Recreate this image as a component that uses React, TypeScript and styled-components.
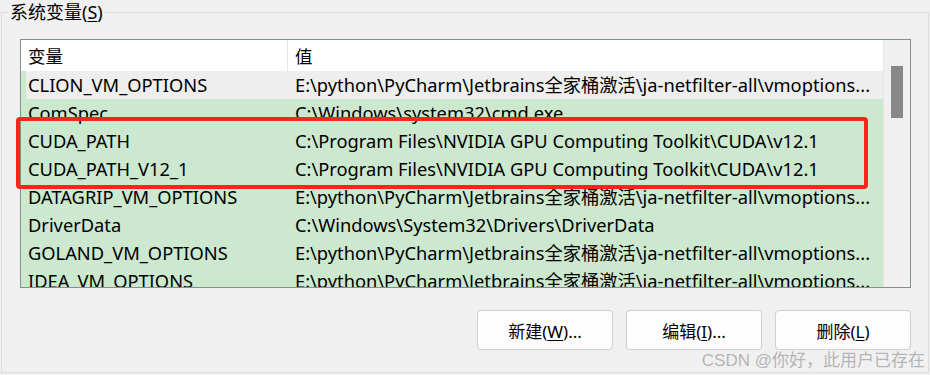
import React from 'react';
import styled, { createGlobalStyle } from 'styled-components';

const FONT = `"Noto Sans", "Noto Sans CJK SC", sans-serif`;

const GlobalStyle = createGlobalStyle`
    html, body {
        margin: 0;
        padding: 0;
        background: #f0f0f0;
    }
    body {
        font-family: ${FONT};
        color: #000;
    }
`;

const Page = styled.div`
    position: relative;
    width: 930px;
    height: 375px;
    overflow: hidden;
    background: #f0f0f0;
`;

const Group = styled.fieldset`
    margin: 0 0 0 1px;
    padding: 0;
    width: 928px;
    height: 373px;
    box-sizing: border-box;
    border: 1px solid #dcdcdc;
    border-radius: 0;
`;

const Legend = styled.legend`
    margin-left: 6px;
    padding: 0 2px;
    font-size: 18px;
    line-height: 24px;
`;

const Key = styled.span`
    text-decoration: underline;
    text-underline-offset: 2px;
`;

const ListBox = styled.div`
    position: relative;
    margin: 15px 0 0 18px;
    width: 891px;
    height: 249px;
    box-sizing: border-box;
    border: 1px solid #84908d;
    display: grid;
    grid-template-columns: 862px 27px;
    background: #f0f0f0;
`;

const Table = styled.div`
    background: #cce8cf;
    overflow: hidden;
`;

const Cols = styled.div`
    display: grid;
    grid-template-columns: 266px 1px 1fr;
`;

const HeaderRow = styled(Cols)`
    height: 31px;
    background: #ffffff;
    align-items: center;
    font-size: 17.5px;
`;

const HeaderSep = styled.div`
    align-self: stretch;
    background: #e5e5e5;
`;

const Row = styled(Cols)<{ hover?: boolean }>`
    height: 28px;
    align-items: center;
    font-size: 18.3px;
    background: ${p => (p.hover ? '#eeeeee' : '#cce8cf')};
    box-shadow: ${p => (p.hover ? 'inset 5px 0 0 #cce8cf' : 'none')};
`;

const Cell = styled.div`
    padding-left: 7px;
    white-space: nowrap;
    overflow: hidden;
    line-height: 28px;
`;

const Scroll = styled.div`
    border-left: 1px solid #e6e6e6;
    padding: 26px 0 0 7px;
    background: #f0f0f0;
`;

const Thumb = styled.div`
    width: 12px;
    height: 52px;
    background: #888888;
`;

const Mark = styled.div`
    position: absolute;
    left: -5px;
    top: 77px;
    width: 852px;
    height: 72px;
    box-sizing: border-box;
    border: 4px solid #ff2419;
    border-radius: 4px;
    pointer-events: none;
`;

const Buttons = styled.div`
    display: flex;
    justify-content: flex-end;
    gap: 13px;
    margin: 22px 0 0 0;
    width: 909px;
`;

const Button = styled.button`
    width: 136px;
    height: 40px;
    box-sizing: border-box;
    background: #fdfdfd;
    border: 1px solid #d0d0d0;
    border-radius: 4px;
    font-family: ${FONT};
    font-size: 17px;
    color: #000;
    padding: 0;
`;

const Watermark = styled.div`
    position: absolute;
    right: 5px;
    bottom: 4px;
    font-family: "Liberation Sans", "Noto Sans CJK SC", sans-serif;
    font-size: 17px;
    color: rgba(160, 160, 160, 0.75);
    white-space: nowrap;
`;

const JB = 'E:\\python\\PyCharm\\Jetbrains全家桶激活\\ja-netfilter-all\\vmoptions...';
const CUDA = 'C:\\Program Files\\NVIDIA GPU Computing Toolkit\\CUDA\\v12.1';

const vars = [
    { name: 'CLION_VM_OPTIONS', value: JB, hover: true },
    { name: 'ComSpec', value: 'C:\\Windows\\system32\\cmd.exe' },
    { name: 'CUDA_PATH', value: CUDA },
    { name: 'CUDA_PATH_V12_1', value: CUDA },
    { name: 'DATAGRIP_VM_OPTIONS', value: JB },
    { name: 'DriverData', value: 'C:\\Windows\\System32\\Drivers\\DriverData' },
    { name: 'GOLAND_VM_OPTIONS', value: JB },
    { name: 'IDEA_VM_OPTIONS', value: JB },
];

const App = () => {
    return (
        <Page>
            <GlobalStyle />
            <Group>
                <Legend>
                    系统变量(<Key>S</Key>)
                </Legend>
                <ListBox>
                    <Table>
                        <HeaderRow>
                            <Cell>变量</Cell>
                            <HeaderSep />
                            <Cell>值</Cell>
                        </HeaderRow>
                        {vars.map((v, i) => (
                            <Row key={i} hover={v.hover}>
                                <Cell>{v.name}</Cell>
                                <div />
                                <Cell>{v.value}</Cell>
                            </Row>
                        ))}
                    </Table>
                    <Scroll>
                        <Thumb />
                    </Scroll>
                    <Mark />
                </ListBox>
                <Buttons>
                    <Button>
                        新建(<Key>W</Key>)...
                    </Button>
                    <Button>
                        编辑(<Key>I</Key>)...
                    </Button>
                    <Button>
                        删除(<Key>L</Key>)
                    </Button>
                </Buttons>
            </Group>
            <Watermark>CSDN @你好，此用户已存在</Watermark>
        </Page>
    );
};

export default App;
